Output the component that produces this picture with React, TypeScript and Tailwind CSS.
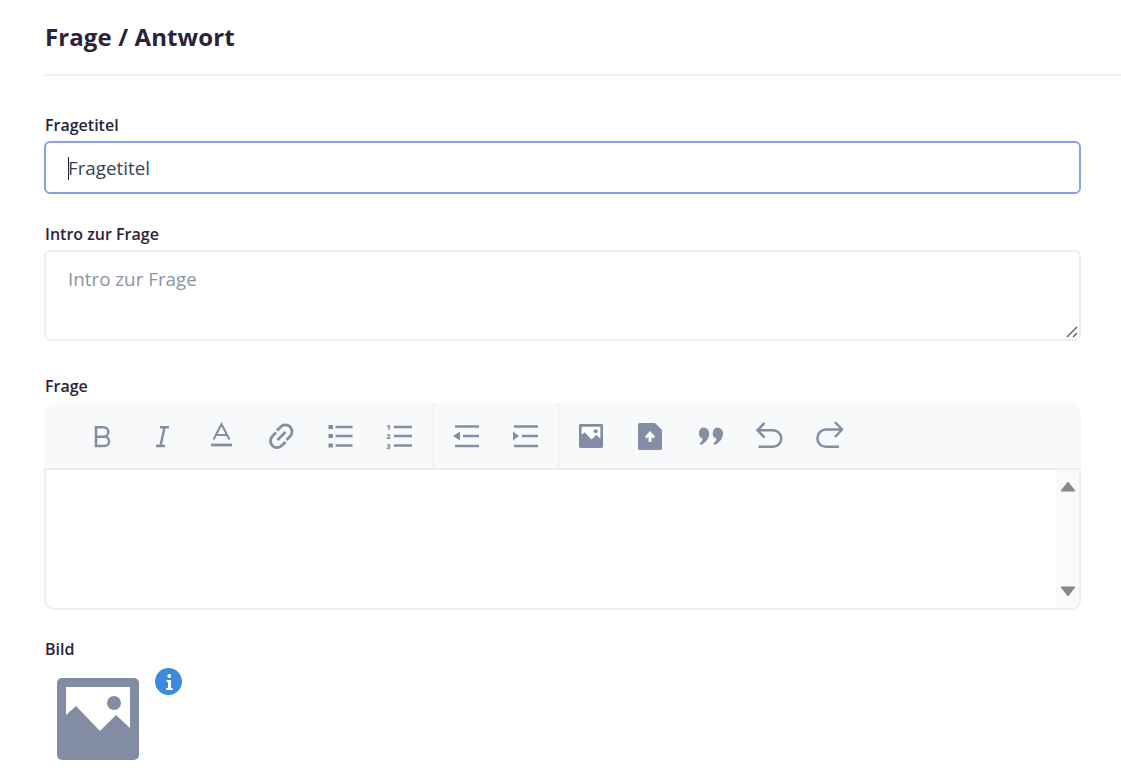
import React from 'react';

const FONT = "font-['Open_Sans','Noto_Sans',sans-serif]";
const LABEL = 'block pl-px text-[16px] leading-[20px] font-semibold';

function Ico({ children }: { children: React.ReactNode }) {
  return (
    <button className="w-[59.5px] h-full flex items-center justify-center shrink-0">
      <svg width="32" height="32" viewBox="0 0 32 32" fill="none" stroke="#838da4" strokeWidth="2.5">
        {children}
      </svg>
    </button>
  );
}

function PictureGlyph() {
  return (
    <>
      <rect width="82" height="82" rx="5" fill="#828ca3" stroke="none" />
      <path d="M9 9H73V50L59 37 43 53 19 28 9 37Z" fill="#fff" stroke="none" />
      <circle cx="57" cy="25" r="7" fill="#828ca3" stroke="none" />
    </>
  );
}

function Toolbar() {
  return (
    <div className="h-[65px] bg-[#f8f9fb] rounded-t-[10px] flex pl-[28px]">
      <div className="flex items-center h-full pr-[4px] border-r border-[#e9ebf0]">
        <Ico><path d="M10 7.200h7.500a4.800 4.800 0 0 1 0 9.600H10zM10 16.800h8.500a4.600 4.600 0 0 1 0 9.200H10z" /></Ico>
        <Ico>
          <path d="M15 7.200h9M19.500 7.200 15.500 26M11 26h9" />
        </Ico>
        <Ico>
          <path d="M8.500 19.500 16.500 4.200 24.500 19.500M11.500 15h10" strokeWidth="2" />
          <path d="M6 25h21" strokeWidth="2.800" />
        </Ico>
        <Ico>
          <path d="M13 10.500l3.600-3.600a6.600 6.600 0 0 1 9.500 9.400l-3.600 3.700" strokeWidth="2.800" />
          <path d="M21.500 22l-3.600 3.600a6.600 6.600 0 0 1-9.500-9.400l3.600-3.700" strokeWidth="2.800" />
          <path d="M13.500 20l8-8" strokeWidth="2.800" />
        </Ico>
        <Ico>
          <path d="M4.500 5h4.500v4H4.500zM4.500 14h4.500v4H4.500zM4.500 23.500h4.500v4H4.500z" fill="#838da4" stroke="none" />
          <path d="M11.500 7h17M11.500 16h17M11.500 25.500h17" />
        </Ico>
        <Ico>
          <text x="3.500" y="9.500" fontSize="7" fontWeight="800" fill="#838da4" stroke="none" fontFamily="'Open Sans',sans-serif">1</text>
          <text x="3.500" y="19" fontSize="7" fontWeight="800" fill="#838da4" stroke="none" fontFamily="'Open Sans',sans-serif">2</text>
          <text x="3.500" y="28.500" fontSize="7" fontWeight="800" fill="#838da4" stroke="none" fontFamily="'Open Sans',sans-serif">3</text>
          <path d="M11 7h18M11 16h18M11 25.500h18" />
        </Ico>
      </div>
      <div className="flex items-center h-full pl-[2px] pr-[3px] border-r border-[#e9ebf0]">
        <Ico>
          <path d="M5 6.500h24M13 16h16M5 26h24" />
          <path d="M3 16l7-4.500v9z" fill="#838da4" stroke="none" />
        </Ico>
        <Ico>
          <path d="M5 6.500h24M13 16h16M5 26h24" />
          <path d="M10 16 4 11.500v9z" fill="#838da4" stroke="none" />
        </Ico>
      </div>
      <div className="flex items-center h-full pl-[2px]">
        <Ico>
          <g transform="translate(4 4) scale(0.2927)"><PictureGlyph /></g>
        </Ico>
        <Ico>
          <path d="M5.500 3H21l7 7v18.500a1.500 1.500 0 0 1-1.500 1.500h-21A1.500 1.500 0 0 1 4 28.500v-24A1.500 1.500 0 0 1 5.500 3Z" fill="#838da4" stroke="none" />
          <path d="M16 22v-8.500M12 17.500 16 13l4 4.500" stroke="#fff" strokeWidth="2.800" />
        </Ico>
        <Ico>
          <path d="M9.500 7.500a5.700 5.700 0 0 1 5.700 5.700c0 5.300-3.500 9.300-8.200 11.800l-1.500-1.500c2-1.800 3-3.300 3.200-5A5.700 5.700 0 0 1 9.500 7.500ZM23.300 7.500a5.700 5.700 0 0 1 5.700 5.700c0 5.300-3.500 9.300-8.200 11.800l-1.500-1.500c2-1.800 3-3.300 3.200-5A5.700 5.700 0 0 1 23.300 7.500Z" fill="#838da4" stroke="none" />
        </Ico>
        <Ico>
          <path d="M11.500 2.800 4.500 10.300l7 7.400" />
          <path d="M5 10.300h15a8.200 8.200 0 0 1 0 16.500H5.500" />
        </Ico>
        <Ico>
          <path d="M22 2 29 9.500 22 17" />
          <path d="M28.500 9.500H13a8.600 8.600 0 0 0 0 17.300h13" />
        </Ico>
      </div>
    </div>
  );
}

export default function App() {
  return (
    <div className={`${FONT} w-[1121px] h-[774px] overflow-hidden bg-white text-[#2b2438]`}>
      <div className="ml-[44px] h-[76px] pt-[20px] border-b-2 border-[#f0f1f4]">
        <h1 className="pl-px text-[24px] leading-[34px] font-bold tracking-[0.1px]">Frage / Antwort</h1>
      </div>

      <div className="pl-[44px] w-[1081px] pt-[39px]">
        <label className={`${LABEL} mb-[6px]`}>Fragetitel</label>
        <div className="relative">
          <input
            defaultValue="Fragetitel"
            className="block w-full h-[53px] px-[22px] rounded-[6px] border-2 border-[#8f9ce6] text-[18.8px] text-[#3a4256] outline-none"
          />
          <span className="absolute left-[24px] top-[16px] w-px h-[23px] bg-[#2b2438]" />
        </div>

        <label className={`${LABEL} mt-[30px] mb-[6px]`}>Intro zur Frage</label>
        <div className="relative">
          <textarea
            placeholder="Intro zur Frage"
            className="block w-full h-[91px] px-[22px] py-[12px] rounded-[6px] border-2 border-[#eceef2] text-[18.8px] leading-[30px] outline-none resize-none placeholder:text-[#8a94a6]"
          />
          <svg className="absolute right-[3px] bottom-[3px]" width="12" height="12" viewBox="0 0 12 12" fill="none" stroke="#555" strokeWidth="1.200">
            <path d="M1 11 11 1M7 11l4-4" />
          </svg>
        </div>

        <label className={`${LABEL} mt-[35px] mb-[7px]`}>Frage</label>
        <div className="rounded-[10px]">
          <Toolbar />
          <div className="h-[142px] border-2 border-[#eceef2] rounded-b-[10px] flex justify-end overflow-hidden">
            <div className="w-[23px] h-full bg-[#fafafa] flex flex-col items-center justify-between pt-[11px] pb-[11px]">
              <svg width="16" height="11" viewBox="0 0 16 11"><path d="M8 1 15 10H1Z" fill="#888" stroke="#888" strokeLinejoin="round" /></svg>
              <svg width="16" height="11" viewBox="0 0 16 11"><path d="M8 10 15 1H1Z" fill="#888" stroke="#888" strokeLinejoin="round" /></svg>
            </div>
          </div>
        </div>

        <label className={`${LABEL} mt-[29px]`}>Bild</label>
        <div className="relative mt-[19px] ml-[13px] w-[82px] h-[82px]">
          <svg width="82" height="82" viewBox="0 0 82 82"><PictureGlyph /></svg>
          <span className="absolute left-[98px] top-[-10px] w-[27px] h-[27px] rounded-full bg-[#3d8bdc] flex items-center justify-center">
            <svg width="8" height="16" viewBox="0 0 8 16" fill="#fff">
              <circle cx="4.300" cy="2" r="1.900" />
              <path d="M1.500 6H6V14H7.500V16H1V14H3V8H1.500Z" />
            </svg>
          </span>
        </div>
      </div>
    </div>
  );
}
